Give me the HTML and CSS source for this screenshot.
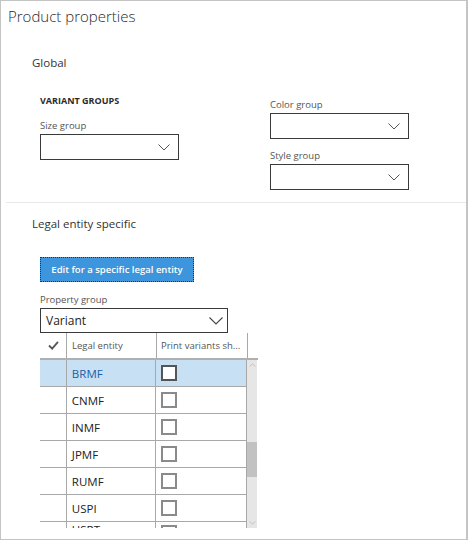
FILE: index.html
```html
<!DOCTYPE html>
<html>
<head>
<meta charset="utf-8">
<link rel="stylesheet" href="styles.css">
</head>
<body>
<div class="frame">
  <div class="title">Product properties</div>
  <div class="section-title global-title">Global</div>
  <div class="groups">
    <div class="col col-left">
      <div class="caps">VARIANT GROUPS</div>
      <div class="label">Size group</div>
      <div class="select small"><svg class="chev" viewBox="0 0 12 7" width="12" height="7"><path d="M0.5 0.5 L6 6 L11.5 0.5" fill="none" stroke="#555" stroke-width="1"/></svg></div>
    </div>
    <div class="col col-right">
      <div class="label">Color group</div>
      <div class="select small"><svg class="chev" viewBox="0 0 12 7" width="12" height="7"><path d="M0.5 0.5 L6 6 L11.5 0.5" fill="none" stroke="#555" stroke-width="1"/></svg></div>
      <div class="label label-gap">Style group</div>
      <div class="select small"><svg class="chev" viewBox="0 0 12 7" width="12" height="7"><path d="M0.5 0.5 L6 6 L11.5 0.5" fill="none" stroke="#555" stroke-width="1"/></svg></div>
    </div>
  </div>
  <div class="sep"></div>
  <div class="section-title legal-title">Legal entity specific</div>
  <div class="legal">
    <button class="btn">Edit for a specific legal entity</button>
    <div class="label prop-label">Property group</div>
    <div class="select big"><span>Variant</span><svg class="chev" viewBox="0 0 14 8" width="14" height="8"><path d="M0.5 0.5 L7 7 L13.5 0.5" fill="none" stroke="#444" stroke-width="1.1"/></svg></div>
    <div class="table">
      <div class="row head">
        <div class="c1"><svg viewBox="0 0 12 10" width="11" height="9"><path d="M1 5 L4.5 8.5 L11 1" fill="none" stroke="#555" stroke-width="2"/></svg></div>
        <div class="c2">Legal entity</div>
        <div class="c3">Print variants sh...</div>
      </div>
      <div class="body">
        <div class="rows">
          <div class="row sel"><div class="c1"></div><div class="c2">BRMF</div><div class="c3"><span class="cb dark"></span></div></div>
          <div class="row"><div class="c1"></div><div class="c2">CNMF</div><div class="c3"><span class="cb"></span></div></div>
          <div class="row"><div class="c1"></div><div class="c2">INMF</div><div class="c3"><span class="cb"></span></div></div>
          <div class="row"><div class="c1"></div><div class="c2">JPMF</div><div class="c3"><span class="cb"></span></div></div>
          <div class="row"><div class="c1"></div><div class="c2">RUMF</div><div class="c3"><span class="cb"></span></div></div>
          <div class="row"><div class="c1"></div><div class="c2">USPI</div><div class="c3"><span class="cb"></span></div></div>
          <div class="row last"><div class="c1"></div><div class="c2">USRT</div><div class="c3"><span class="cb"></span></div></div>
        </div>
        <div class="scroll">
          <svg class="arr" viewBox="0 0 8 5" width="7" height="4"><path d="M0.5 4.5 L4 1 L7.5 4.5" fill="none" stroke="#b5b5b5" stroke-width="1"/></svg>
          <div class="thumb"></div>
          <svg class="arr down" viewBox="0 0 8 5" width="7" height="4"><path d="M0.5 0.5 L4 4 L7.5 0.5" fill="none" stroke="#b5b5b5" stroke-width="1"/></svg>
        </div>
      </div>
    </div>
  </div>
</div>
</body>
</html>
```
FILE: styles.css
```css
* { box-sizing: border-box; }
body {
  margin: 0;
  background: #fff;
  font-family: "Open Sans", "Noto Sans", sans-serif;
  color: #333;
}
.frame {
  width: 468px;
  height: 540px;
  border: 1px solid #c4c4c4;
  border-right: 2px solid #c4c4c4;
  overflow: hidden;
}
.title {
  font-size: 15px;
  font-weight: 300;
  color: #2a2a2a;
  line-height: 20px;
  margin: 5px 0 0 7px;
}
.section-title {
  font-size: 11.5px;
  color: #333;
  line-height: 16px;
  padding-left: 31px;
}
.global-title { margin-top: 29px; }
.groups {
  display: flex;
  padding-left: 39px;
  margin-top: 24px;
  height: 107px;
}
.col { display: flex; flex-direction: column; flex: none; }
.col-left { width: 230px; }
.col-right { width: 140px; padding-top: 3px; }
.caps {
  font-size: 9px;
  font-weight: 700;
  color: #2b2b2b;
  line-height: 12px;
}
.label {
  font-size: 9.5px;
  color: #555;
  line-height: 13px;
  margin-top: 12px;
  margin-bottom: 2px;
}
.col-right .label { margin-top: 0; }
.col-right .label-gap { margin-top: 10px; }
.select {
  border: 1px solid #3a3a3a;
  display: flex;
  align-items: center;
  justify-content: space-between;
  background: #fff;
  flex: none;
}
.select.small { width: 139px; height: 26px; justify-content: flex-end; padding-right: 8px; }
.select.big { width: 188px; height: 25px; padding: 0 4px 0 5px; font-size: 12px; color: #222; }
.sep {
  height: 1px;
  background: #e8e8e8;
  margin-left: 5px;
}
.legal-title { margin-top: 13px; }
.legal { padding-left: 39px; }
.btn {
  display: block;
  margin-top: 25px;
  width: 154px;
  height: 25px;
  background: #3c95dd;
  border: 1px dotted #0b3c66;
  color: #fff;
  font-family: "Open Sans", "Noto Sans", sans-serif;
  font-size: 9.5px;
  font-weight: 600;
  padding: 0;
}
.prop-label { margin-top: 11px; margin-bottom: 2px; }
.table { width: 218px; }
.row {
  display: flex;
  height: 27px;
  border-bottom: 1px solid #a8a8a8;
  font-size: 11.5px;
  color: #222;
}
.row > div { display: flex; align-items: center; }
.c1 { width: 27px; border-right: 1px solid #a8a8a8; justify-content: center; }
.c2 { width: 90px; border-right: 1px solid #a8a8a8; padding-left: 5px; }
.c3 { width: 91px; border-right: 1px solid #a8a8a8; padding-left: 5px; }
.head { height: 27px; border-bottom: 2px solid #b0b0b0; }
.head .c2, .head .c3 { font-size: 9.5px; color: #555; }
.head .c3 { padding-left: 4px; }
.body { display: flex; height: 168px; overflow: hidden; }
.rows { width: 207px; }
.sel { background: #c7e0f4; }
.sel .c2 { color: #1b5ea6; }
.last .c2 { align-items: flex-start; padding-top: 0; }
.last .c3 { align-items: flex-start; padding-top: 3px; }
.cb {
  width: 16px;
  height: 16px;
  border: 2px solid #8a8a8a;
  background: #fff;
  flex: none;
}
.cb.dark { border-color: #555; }
.scroll {
  width: 10px;
  background: #e6e6e6;
  display: flex;
  flex-direction: column;
  align-items: center;
}
.arr { margin-top: 3px; }
.thumb {
  width: 10px;
  height: 35px;
  background: #c2c2c2;
  margin-top: 75px;
}
.arr.down { margin-top: auto; margin-bottom: 3px; }
```
